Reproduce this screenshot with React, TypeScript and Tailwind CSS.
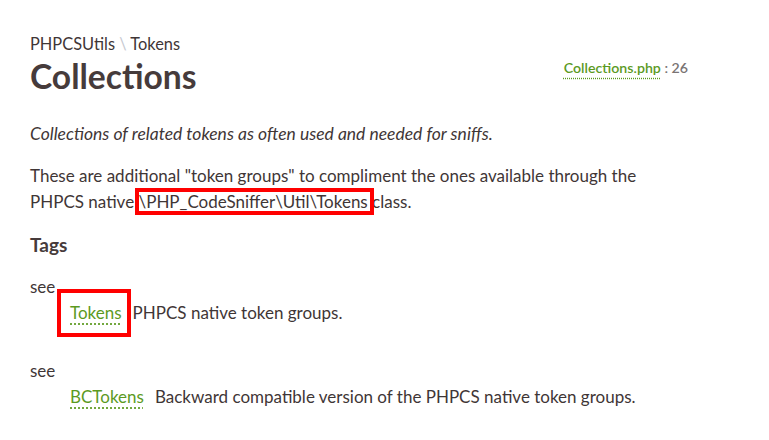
import React from "react"

const font = { fontFamily: "Lato, 'Noto Sans', sans-serif" }

function Mark({ children, className }: { children: React.ReactNode; className: string }) {
  return (
    <span className="relative">
      {children}
      <span className={`pointer-events-none absolute border-4 border-[#ff0000] ${className}`} />
    </span>
  )
}

function Link({ children, className = "" }: { children: React.ReactNode; className?: string }) {
  return (
    <a className={`text-[#5c9a1f] underline decoration-dotted decoration-[#5c9a1f] underline-offset-[5px] ${className}`}>
      {children}
    </a>
  )
}

function SeeTag({ name, desc, mark }: { name: string; desc: string; mark?: boolean }) {
  const link = <Link>{name}</Link>
  return (
    <div className="mb-[32px]">
      <div className="leading-[26px]">see</div>
      <div className="flex gap-[11px] pl-[40px] leading-[26px]">
        {mark ? <Mark className="-left-[13px] -right-[9px] -top-[11px] -bottom-[11px]">{link}</Mark> : link}
        <span>{desc}</span>
      </div>
    </div>
  )
}

export default function App() {
  return (
    <div className="min-h-[440px] w-[769px] bg-white px-[30px] pt-[33px] text-[17px] text-[#3f3636]" style={font}>
      <div className="flex items-start justify-between pr-[51px]">
        <div>
          <div className="text-[16.4px] leading-[22px]">
            PHPCSUtils <span className="text-[#c6c9d1]">\</span> Tokens
          </div>
          <h1 className="text-[33.6px] font-bold leading-[42px] text-[#463b3b]">Collections</h1>
        </div>
        <div className="mt-[24px] text-[14.2px] font-semibold text-[#7a7474]">
          <Link className="underline-offset-[4px]">Collections.php</Link> : 26
        </div>
      </div>

      <p className="mt-[24px] text-[17.5px] italic leading-[26px]">Collections of related tokens as often used and needed for sniffs.</p>

      <p className="mt-[16px] leading-[26px]">
        These are additional "token groups" to compliment the ones available through the
        <br />
        PHPCS native{" "}
        <Mark className="-left-[4px] -right-[6px] -top-[3px] -bottom-[3px]">
          <code style={font}>\PHP_CodeSniffer\Util\Tokens</code>
        </Mark>{" "}
        class.
      </p>

      <h2 className="mt-[16px] text-[19px] font-bold leading-[28px] text-[#463b3b]">Tags</h2>

      <div className="mt-[15px]">
        <SeeTag name="Tokens" desc="PHPCS native token groups." mark />
        <SeeTag name="BCTokens" desc="Backward compatible version of the PHPCS native token groups." />
      </div>
    </div>
  )
}
